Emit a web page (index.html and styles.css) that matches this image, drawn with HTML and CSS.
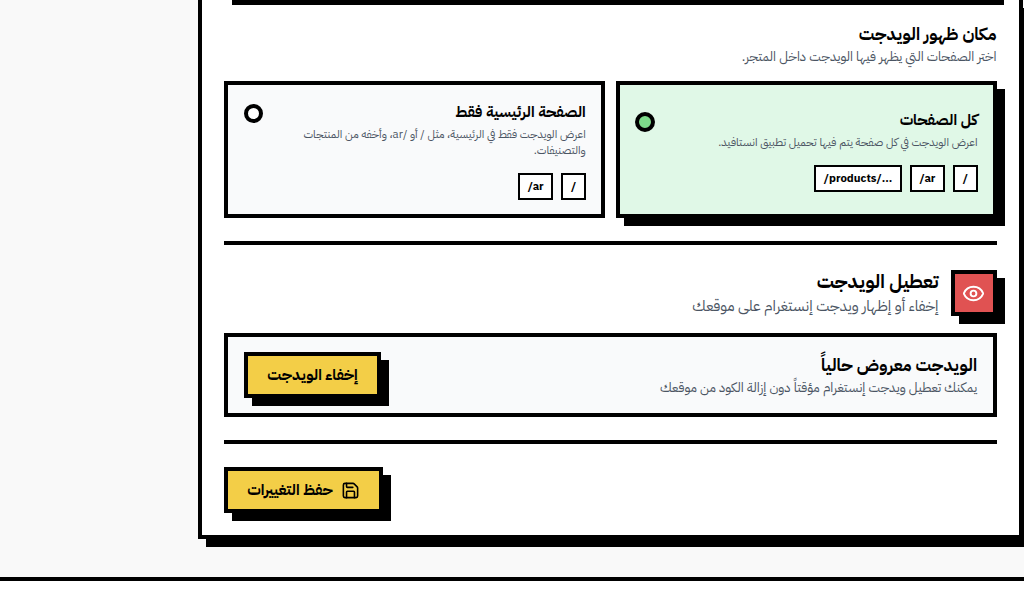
FILE: index.html
```html
<!DOCTYPE html>
<html lang="ar" dir="rtl">
<head>
    <meta charset="UTF-8">
    <meta name="viewport" content="width=device-width, initial-scale=1.0">
    <title>إعدادات الويدجت</title>
    <link rel="stylesheet" href="styles.css">
</head>
<body>

    <main class="page">
        <div class="panel">
            <div class="prev-shadow"></div>

            <section class="section">
                <h3 class="section-title">مكان ظهور الويدجت</h3>
                <p class="section-desc">اختر الصفحات التي يظهر فيها الويدجت داخل المتجر.</p>

                <div class="options">
                    <div class="option selected">
                        <div class="option-body">
                            <h4>كل الصفحات</h4>
                            <p>اعرض الويدجت في كل صفحة يتم فيها تحميل تطبيق انستافيد.</p>
                            <div class="tags">
                                <span class="tag">/</span>
                                <span class="tag">/ar</span>
                                <span class="tag">/products/...</span>
                            </div>
                        </div>
                        <span class="radio"></span>
                    </div>
                    <div class="option">
                        <div class="option-body">
                            <h4>الصفحة الرئيسية فقط</h4>
                            <p>اعرض الويدجت فقط في الرئيسية، مثل / أو /ar، وأخفه من المنتجات والتصنيفات.</p>
                            <div class="tags">
                                <span class="tag">/</span>
                                <span class="tag">/ar</span>
                            </div>
                        </div>
                        <span class="radio"></span>
                    </div>
                </div>
            </section>

            <hr class="divider">

            <section class="section">
                <div class="head">
                    <div class="head-icon">
                        <svg width="23" height="23" viewBox="0 0 24 24" fill="none" stroke="currentColor" stroke-width="2" stroke-linecap="round" stroke-linejoin="round">
                            <path d="M2.06 12.35a1 1 0 0 1 0-.7 10.75 10.75 0 0 1 19.88 0 1 1 0 0 1 0 .7 10.75 10.75 0 0 1-19.88 0"/>
                            <circle cx="12" cy="12" r="3"/>
                        </svg>
                    </div>
                    <div class="head-text">
                        <h2 class="head-title">تعطيل الويدجت</h2>
                        <p class="head-desc">إخفاء أو إظهار ويدجت إنستغرام على موقعك</p>
                    </div>
                </div>

                <div class="status">
                    <div>
                        <h4>الويدجت معروض حالياً</h4>
                        <p>يمكنك تعطيل ويدجت إنستغرام مؤقتاً دون إزالة الكود من موقعك</p>
                    </div>
                    <button class="button hide-button">إخفاء الويدجت</button>
                </div>
            </section>

            <hr class="divider">

            <div class="actions">
                <button class="button save-button">
                    <svg width="19" height="19" viewBox="0 0 24 24" fill="none" stroke="currentColor" stroke-width="2" stroke-linecap="round" stroke-linejoin="round">
                        <path d="M15.2 3a2 2 0 0 1 1.4.6l3.8 3.8a2 2 0 0 1 .6 1.4V19a2 2 0 0 1-2 2H5a2 2 0 0 1-2-2V5a2 2 0 0 1 2-2z"/>
                        <path d="M17 21v-7a1 1 0 0 0-1-1H8a1 1 0 0 0-1 1v7"/>
                        <path d="M7 3v4a1 1 0 0 0 1 1h7"/>
                    </svg>
                    حفظ التغييرات
                </button>
            </div>
        </div>
    </main>

    <footer class="footer"></footer>

</body>
</html>
```

FILE: styles.css
```css
* {
    margin: 0;
    padding: 0;
    box-sizing: border-box;
}

body {
    background: #fff;
    font-family: 'IBM Plex Sans Arabic', 'Noto Sans', sans-serif;
    color: #000;
    overflow: hidden;
}

.page {
    background: #f9f9f9;
    height: 577px;
    padding-left: 198px;
    display: flex;
    justify-content: flex-end;
    align-items: flex-start;
    overflow: hidden;
}

.panel {
    background: #fff;
    width: 825px;
    flex-shrink: 0;
    height: 539px;
    border: 4px solid #000;
    border-top: none;
    box-shadow: 8px 8px 0 #000;
    padding: 0 22.5px 0 22px;
}

.prev-shadow {
    height: 5px;
    background: #000;
    width: 772px;
    margin-right: -7px;
}

.section-title {
    font-size: 17.1px;
    font-weight: 700;
    line-height: 26px;
    margin-top: 16px;
}

.section-desc {
    font-size: 13.3px;
    line-height: 20px;
    color: #4b5563;
}

.options {
    display: grid;
    grid-template-columns: 1fr 1fr;
    gap: 11px;
    margin-top: 14px;
    height: 137px;
}

.option {
    border: 4px solid #000;
    background: #f9fafb;
    padding: 0 15px 0 15.5px;
    display: flex;
    justify-content: space-between;
    align-items: center;
    gap: 12px;
}

.option.selected {
    background: #e0f8e7;
    box-shadow: 8px 8px 0 #000;
}

.option-body {
    flex: 1;
}

.option h4 {
    font-size: 15.2px;
    line-height: 24px;
    font-weight: 700;
}

.option p {
    font-size: 11.4px;
    line-height: 16px;
    color: #4b5563;
    margin-top: 3px;
}

.tags {
    display: flex;
    gap: 8px;
    margin-top: 14px;
}

.tag {
    border: 2px solid #000;
    background: #fff;
    height: 27px;
    padding: 0 7.6px;
    font-size: 11.4px;
    font-weight: 700;
    line-height: 23px;
    direction: ltr;
}

.radio {
    width: 19px;
    height: 19px;
    border: 4px solid #000;
    border-radius: 50%;
    background: #fff;
    flex-shrink: 0;
    align-self: flex-start;
    margin-top: 19px;
}

.selected .radio {
    width: 20px;
    height: 20px;
    background: #7ddc8a;
    margin-top: 27px;
}

.divider {
    border: none;
    height: 4px;
    background: #000;
    margin-top: 23px;
}

.head {
    display: flex;
    align-items: flex-start;
    gap: 12px;
    margin-top: 25px;
    height: 46px;
}

.head-icon {
    width: 46px;
    height: 46px;
    border: 4px solid #000;
    background: #e05252;
    color: #fff;
    box-shadow: 8px 8px 0 #000;
    display: flex;
    align-items: center;
    justify-content: center;
}

.head-text {
    margin-top: -1px;
}

.head-title {
    font-size: 19px;
    line-height: 25px;
    font-weight: 700;
    margin-bottom: 2px;
}

.head-desc {
    font-size: 15.2px;
    line-height: 21px;
    color: #4b5563;
}

.status {
    border: 4px solid #000;
    background: #f9fafb;
    height: 84px;
    margin-top: 17px;
    padding: 0 15.5px 0 16px;
    display: flex;
    align-items: center;
    justify-content: space-between;
}

.status h4 {
    font-size: 17.1px;
    line-height: 26px;
    font-weight: 700;
}

.status p {
    font-size: 13.3px;
    line-height: 20px;
    color: #4b5563;
}

.button {
    border: 4px solid #000;
    background: #f3ce47;
    color: #000;
    height: 46px;
    font-family: inherit;
    font-size: 15.2px;
    font-weight: 700;
    box-shadow: 8px 8px 0 #000;
    display: flex;
    align-items: center;
    justify-content: center;
    gap: 8px;
}

.hide-button {
    width: 137px;
}

.save-button {
    width: 159px;
}

.actions {
    display: flex;
    justify-content: flex-end;
    margin-top: 23px;
}

.footer {
    border-top: 4px solid #000;
    height: 31px;
    background: #fff;
}
```
